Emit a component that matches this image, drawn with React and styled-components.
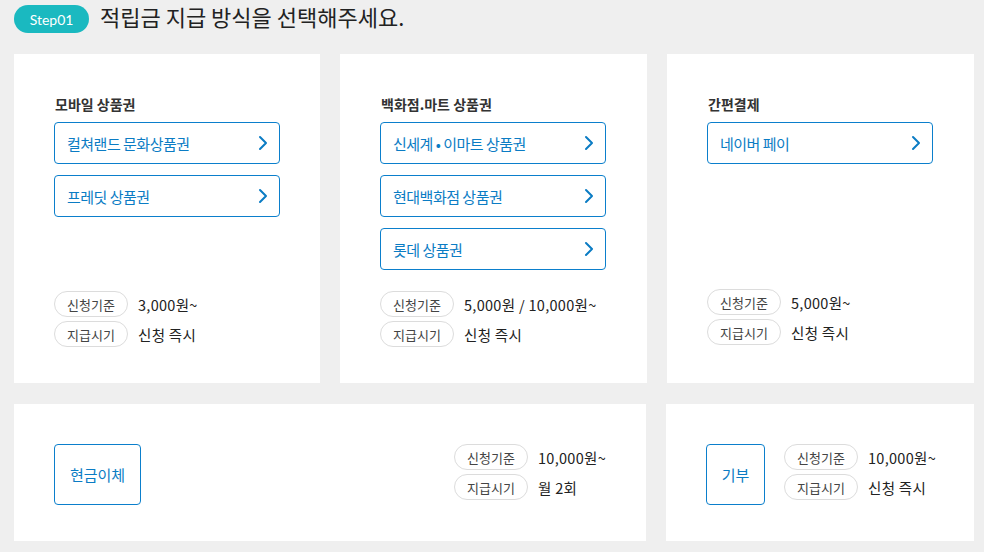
import styled, { createGlobalStyle } from "styled-components";

const GlobalStyle = createGlobalStyle`
  html, body {
    margin: 0;
    padding: 0;
    background: #efefef;
    font-family: "Noto Sans CJK KR", "Noto Sans", sans-serif;
    color: #222;
  }
`;

const Chevron = () => (
  <svg width="10" height="16" viewBox="0 0 10 16" fill="none">
    <path d="M2 2l6 6-6 6" stroke="#0b7cc4" strokeWidth="2" strokeLinecap="round" strokeLinejoin="round" />
  </svg>
);

const groups = [
  {
    title: "모바일 상품권",
    items: ["컬쳐랜드 문화상품권", "프레딧 상품권"],
    base: "3,000원~",
    when: "신청 즉시",
  },
  {
    title: "백화점.마트 상품권",
    items: ["신세계 • 이마트 상품권", "현대백화점 상품권", "롯데 상품권"],
    base: "5,000원 / 10,000원~",
    when: "신청 즉시",
  },
  {
    title: "간편결제",
    items: ["네이버 페이"],
    base: "5,000원~",
    when: "신청 즉시",
    lift: true,
  },
];

function Info({ base, when, lift }) {
  return (
    <InfoList $lift={lift}>
      <InfoRow>
        <Pill>신청기준</Pill>
        <Value>{base}</Value>
      </InfoRow>
      <InfoRow>
        <Pill>지급시기</Pill>
        <Value>{when}</Value>
      </InfoRow>
    </InfoList>
  );
}

export default function App() {
  return (
    <Page>
      <GlobalStyle />
      <Header>
        <StepBadge>Step01</StepBadge>
        <Heading>적립금 지급 방식을 선택해주세요.</Heading>
      </Header>
      <TopGrid>
        {groups.map((g) => (
          <Card key={g.title}>
            <CardTitle>{g.title}</CardTitle>
            <ButtonList>
              {g.items.map((it) => (
                <OptionButton key={it}>
                  <span>{it}</span>
                  <Chevron />
                </OptionButton>
              ))}
            </ButtonList>
            <Info base={g.base} when={g.when} lift={g.lift} />
          </Card>
        ))}
      </TopGrid>
      <BottomGrid>
        <WideCard>
          <SquareButton $w={87}>현금이체</SquareButton>
          <Info base="10,000원~" when="월 2회" />
        </WideCard>
        <WideCard $start>
          <SquareButton $w={59}>기부</SquareButton>
          <Info base="10,000원~" when="신청 즉시" />
        </WideCard>
      </BottomGrid>
    </Page>
  );
}

const Page = styled.div`
  width: 960px;
  padding: 5px 10px 10px 14px;
`;

const Header = styled.div`
  display: flex;
  align-items: center;
  gap: 11px;
  height: 28px;
`;

const StepBadge = styled.div`
  width: 75px;
  height: 28px;
  border-radius: 14px;
  background: #1ab9c0;
  color: #fff;
  font-family: "Lato", "Noto Sans", sans-serif;
  font-size: 14px;
  font-weight: 400;
  display: flex;
  align-items: center;
  justify-content: center;
`;

const Heading = styled.h1`
  margin: 0;
  font-size: 22px;
  font-weight: 400;
  color: #222;
  margin-top: -7px;
`;

const TopGrid = styled.div`
  margin-top: 21px;
  display: grid;
  grid-template-columns: 306px 307px 307px;
  column-gap: 20px;
`;

const Card = styled.div`
  background: #fff;
  height: 329px;
  box-sizing: border-box;
  padding: 40px 40px 36px 40px;
  display: flex;
  flex-direction: column;
`;

const CardTitle = styled.div`
  font-size: 14px;
  font-weight: 700;
  color: #333;
  line-height: 20px;
  padding-left: 1px;
`;

const ButtonList = styled.div`
  margin-top: 8px;
  display: flex;
  flex-direction: column;
  gap: 11px;
`;

const OptionButton = styled.button`
  width: 226px;
  height: 42px;
  box-sizing: border-box;
  border: 1px solid #0b7fcc;
  border-radius: 4px;
  background: #fff;
  display: flex;
  align-items: center;
  justify-content: space-between;
  padding: 0 11px 0 12px;
  font-family: inherit;
  font-size: 15px;
  color: #0b7cc4;
  cursor: pointer;
  letter-spacing: -0.5px;
`;

const InfoList = styled.div`
  margin-top: auto;
  margin-bottom: ${(p) => (p.$lift ? "2px" : "0")};
  display: flex;
  flex-direction: column;
  gap: 4px;
  flex-shrink: 0;
`;

const InfoRow = styled.div`
  display: flex;
  align-items: center;
  gap: 10px;
  white-space: nowrap;
`;

const Pill = styled.span`
  width: 74px;
  height: 26px;
  flex-shrink: 0;
  box-sizing: border-box;
  border: 1px solid #dcdcdc;
  border-radius: 13px;
  display: inline-flex;
  align-items: center;
  justify-content: center;
  font-size: 13px;
  color: #444;
`;

const Value = styled.span`
  font-size: 14.5px;
  color: #222;
  letter-spacing: 0.3px;
  white-space: nowrap;
`;

const BottomGrid = styled.div`
  margin-top: 21px;
  display: grid;
  grid-template-columns: 632px 308px;
  column-gap: 20px;
`;

const WideCard = styled.div`
  background: #fff;
  height: 137px;
  box-sizing: border-box;
  padding: 40px ${(p) => (p.$start ? "20px" : "40px")} 0 40px;
  display: flex;
  align-items: flex-start;
  justify-content: ${(p) => (p.$start ? "flex-start" : "space-between")};
  gap: 19px;

  ${InfoList} {
    margin-top: 0;
  }
`;

const SquareButton = styled.button`
  width: ${(p) => p.$w}px;
  height: 61px;
  flex-shrink: 0;
  box-sizing: border-box;
  border: 1px solid #0b7fcc;
  border-radius: 4px;
  background: #fff;
  font-family: inherit;
  font-size: 15px;
  color: #0b7cc4;
  cursor: pointer;
  padding: 0;
`;
